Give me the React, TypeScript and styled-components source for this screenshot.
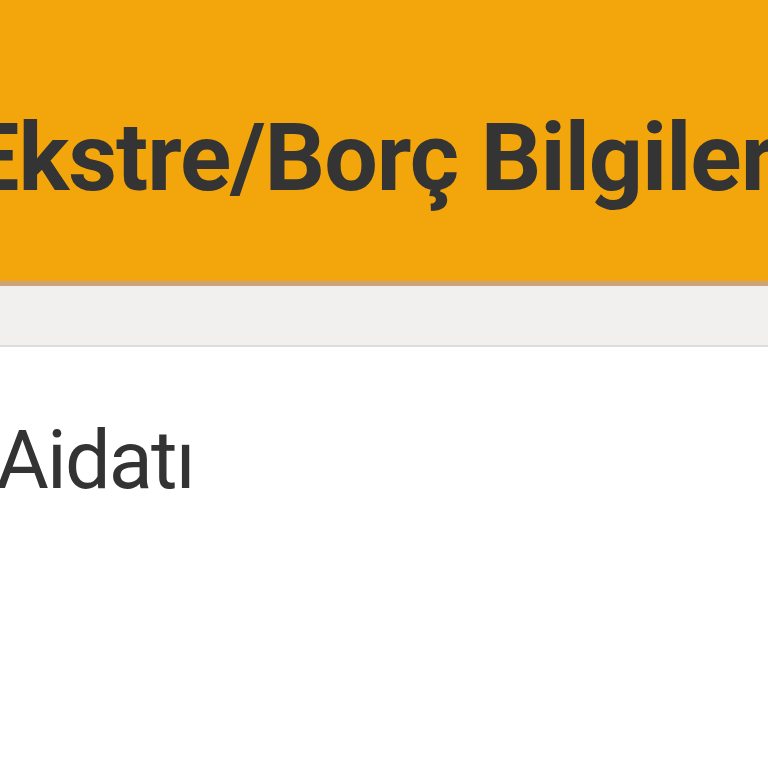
import React from "react";
import styled, { createGlobalStyle } from "styled-components";

const Global = createGlobalStyle`
  html, body { margin: 0; padding: 0; background: #ffffff; }
  body { width: 768px; height: 768px; overflow: hidden; font-family: Roboto, "Noto Sans", sans-serif; }
`;

const Page = styled.div`
  width: 768px;
  height: 768px;
  display: flex;
  flex-direction: column;
  overflow: hidden;
  background: #ffffff;
`;

const Header = styled.header`
  height: 286px;
  box-sizing: border-box;
  padding-top: 34px;
  flex: none;
  background: #f3a50c;
  border-bottom: 5px solid #cda47a;
  display: flex;
  align-items: center;
  overflow: hidden;
`;

const Title = styled.h1`
  margin: 0 0 0 -34px;
  font-family: Roboto, sans-serif;
  font-weight: 700;
  font-size: 95px;
  line-height: 1;
  color: #343434;
  white-space: nowrap;
  letter-spacing: -1px;
`;

const Band = styled.div`
  height: 59px;
  flex: none;
  background: #f1f0ee;
  border-bottom: 2px solid #dcdcdc;
`;

const Content = styled.main`
  flex: 1;
  padding-top: 73px;
  overflow: hidden;
`;

const Label = styled.div`
  margin-left: -4px;
  font-family: Roboto, sans-serif;
  font-weight: 400;
  font-size: 81px;
  line-height: 1;
  color: #333333;
  white-space: nowrap;
  letter-spacing: -1.8px;
`;

export default function App() {
  return (
    <>
      <Global />
      <Page>
        <Header>
          <Title>Ekstre/Borç Bilgileri</Title>
        </Header>
        <Band />
        <Content>
          <Label>Aidatı</Label>
        </Content>
      </Page>
    </>
  );
}
